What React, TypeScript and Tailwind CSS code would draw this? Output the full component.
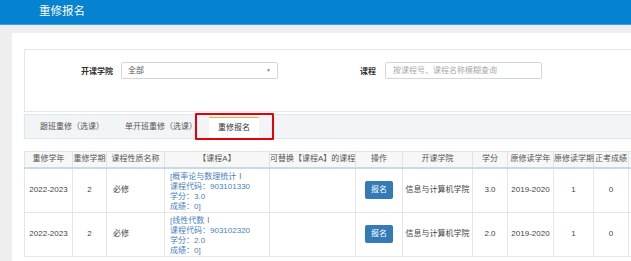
import React from "react";

const font = { fontFamily: '"Liberation Sans", "Noto Sans CJK SC", sans-serif' };

const cols = [48, 34, 58, 105, 86, 47, 70, 35, 46, 40, 35, 60];
const heads = ["重修学年", "重修学期", "课程性质名称", "【课程A】", "可替换【课程A】的课程", "操作", "开课学院", "学分", "原修读学年", "原修读学期", "正考成绩", ""];

const rows = [
  { name: "[概率论与数理统计Ⅰ", code: "903101330", credit: "3.0" },
  { name: "[线性代数Ⅰ", code: "903102320", credit: "2.0" },
];

export default function App() {
  return (
    <div className="w-[631px] h-[261px] overflow-hidden bg-[#eeeeee] text-[#333]" style={font}>
      <div className="h-[25px] bg-[#0582d0] border-b border-[#3a9fe0] flex items-center pl-[39px]">
        <span className="text-white text-[11.5px] leading-none">重修报名</span>
      </div>
      <div className="ml-[12px] mt-[8px] bg-white h-[300px] pt-[16px] pl-[12px]">
        <div className="border border-[#e6e6e6] border-r-0 h-[63px] flex items-start pt-[12px]">
          <div className="w-[88px] text-right text-[8px] font-bold pt-[4px] text-[#333]">开课学院</div>
          <div className="ml-[8px] w-[157px] h-[17px] border border-[#d5d5d5] rounded-[2px] flex items-center justify-between px-[6px] text-[8px] text-[#555]">
            <span>全部</span>
            <span className="text-[5px] text-[#888]">▼</span>
          </div>
          <div className="ml-[82px] text-[8px] font-bold pt-[4px]">课程</div>
          <div className="ml-[9px] w-[157px] h-[17px] border border-[#d5d5d5] rounded-[2px] flex items-center px-[7px] text-[8px] text-[#aaa]">
            按课程号、课程名称模糊查询
          </div>
        </div>
        <div className="mt-[2px] h-[25px] border border-[#d5e9ef] border-r-0 bg-[#f2f4f5] flex items-end text-[8px] text-[#555] relative">
          <div className="pl-[15px] w-[100px] h-full flex items-center">跟班重修（选课）</div>
          <div className="w-[84px] h-full flex items-center">单开班重修（选课）</div>
          <div className="w-[50px] h-[21px] bg-white border-t border-[#e8b33a] flex items-center justify-center text-[#333]">重修报名</div>
          <div className="absolute left-[170px] top-[-2px] w-[79px] h-[27px] border-2 border-solid border-red-600 rounded-[1px]" />
        </div>
        <table className="mt-[12px] border-collapse table-fixed text-[8px] text-[#444]" style={{ width: cols.reduce((a, b) => a + b, 0) }}>
          <colgroup>
            {cols.map((w, i) => (
              <col key={i} style={{ width: w }} />
            ))}
          </colgroup>
          <thead>
            <tr className="h-[16px] bg-[#f7f7f7]">
              {heads.map((h, i) => (
                <th key={i} className="border border-[#e3e3e3] border-b-2 border-b-[#c5dbe8] font-normal text-[#555] whitespace-nowrap p-0">
                  {h}
                </th>
              ))}
            </tr>
          </thead>
          <tbody>
            {rows.map((r, i) => (
              <tr key={i} className="h-[44px]">
                <td className="border border-[#e6e6e6] text-center">2022-2023</td>
                <td className="border border-[#e6e6e6] text-center">2</td>
                <td className="border border-[#e6e6e6] pl-[6px]">必修</td>
                <td className="border border-[#e6e6e6] pl-[5px] text-[#4a80c2] leading-[10px] align-top pt-[3px]">
                  <div>{r.name}</div>
                  <div>课程代码：{r.code}</div>
                  <div>学分：{r.credit}</div>
                  <div>成绩：0]</div>
                </td>
                <td className="border border-[#e6e6e6]"></td>
                <td className="border border-[#e6e6e6] text-center">
                  <span className="inline-flex w-[28px] h-[18px] items-center justify-center bg-[#337ab7] rounded-[2px] text-white">报名</span>
                </td>
                <td className="border border-[#e6e6e6] text-center">信息与计算机学院</td>
                <td className="border border-[#e6e6e6] text-center">{r.credit}</td>
                <td className="border border-[#e6e6e6] text-center">2019-2020</td>
                <td className="border border-[#e6e6e6] text-center">1</td>
                <td className="border border-[#e6e6e6] text-center">0</td>
                <td className="border border-[#e6e6e6]"></td>
              </tr>
            ))}
          </tbody>
        </table>
      </div>
    </div>
  );
}
